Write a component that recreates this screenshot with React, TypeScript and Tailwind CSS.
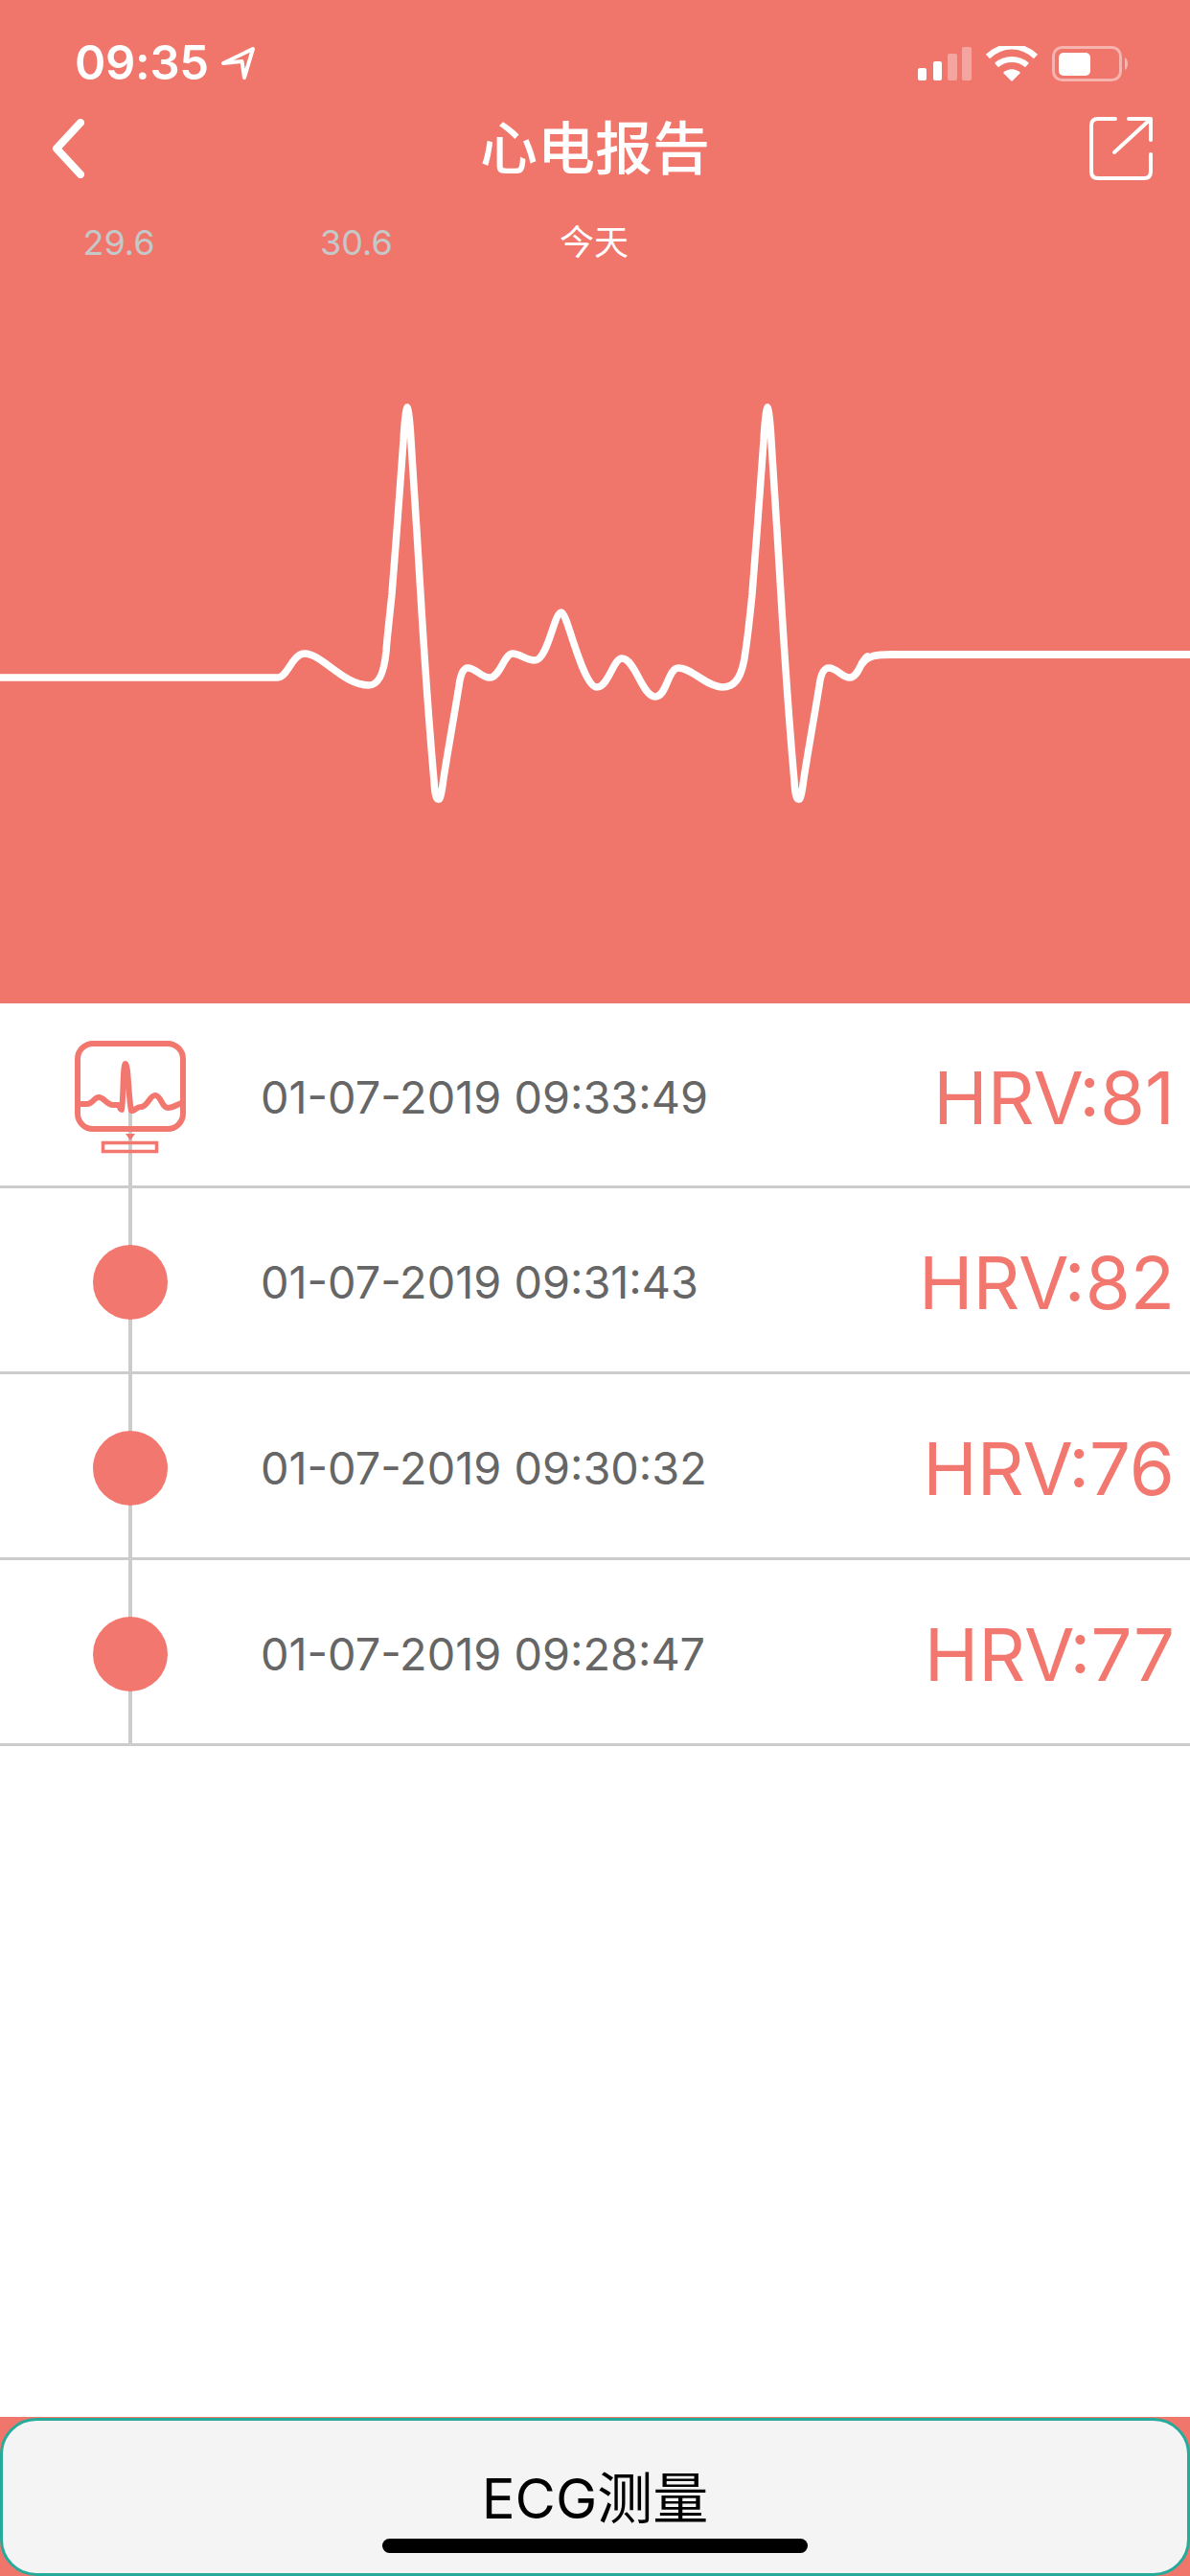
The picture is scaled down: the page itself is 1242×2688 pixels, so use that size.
import React from 'react';

const FONT = "font-['Inter','Noto_Sans_CJK_SC',sans-serif]";

const records = [
  { time: '01-07-2019 09:33:49', hrv: 'HRV:81' },
  { time: '01-07-2019 09:31:43', hrv: 'HRV:82' },
  { time: '01-07-2019 09:30:32', hrv: 'HRV:76' },
  { time: '01-07-2019 09:28:47', hrv: 'HRV:77' },
];

const StatusBar: React.FC = () => (
  <div className="flex h-[113px] items-start justify-between pl-[78px] pr-[62px] pt-[39px]">
    <div className="flex items-center gap-[13px]">
      <span className="text-[49px] leading-[54px] font-semibold tracking-[-0.3px] text-white">09:35</span>
      <svg width="36" height="34" viewBox="0 0 36 34">
        <path d="M2 17 L33 2 L24 32 L21.5 15 Z" fill="none" stroke="white" strokeWidth="4" strokeLinejoin="round" />
      </svg>
    </div>
    <svg width="222" height="38" viewBox="0 0 222 38" className="mt-[9px]">
      <rect x="0" y="23" width="9" height="13" rx="2" fill="white" />
      <rect x="16" y="16" width="9" height="20" rx="2" fill="white" />
      <rect x="31" y="8" width="10" height="28" rx="2" fill="white" opacity="0.35" />
      <rect x="46" y="1" width="10" height="35" rx="2" fill="white" opacity="0.35" />
      <path d="M73 11 C88 -3 108 -3 123 11" fill="none" stroke="white" strokeWidth="6" />
      <path d="M82 20 C91 12 105 12 114 20" fill="none" stroke="white" strokeWidth="6" />
      <path d="M89 28 C94 23 102 23 107 28 L98 37 Z" fill="white" />
      <rect x="141.5" y="1.5" width="70" height="34" rx="9" fill="none" stroke="white" strokeWidth="3" opacity="0.45" />
      <rect x="147" y="7" width="33" height="24" rx="5" fill="white" />
      <path d="M216 12 C220 14 220 23 216 25 Z" fill="white" opacity="0.45" />
    </svg>
  </div>
);

const NavBar: React.FC = () => (
  <div className="flex h-[84px] items-center">
    <div className="flex w-[120px] pl-[54px]">
      <svg width="34" height="62" viewBox="0 0 34 62">
        <path d="M30 4 L5 31 L30 58" fill="none" stroke="white" strokeWidth="8" strokeLinecap="round" strokeLinejoin="round" />
      </svg>
    </div>
    <span className="flex-1 text-center text-[60px] leading-[84px] font-medium text-white">心电报告</span>
    <div className="flex w-[120px] justify-end pr-[39px]">
      <svg width="66" height="66" viewBox="0 0 66 66">
        <path d="M27 2 H9 Q2 2 2 9 V57 Q2 64 9 64 H57 Q64 64 64 57 V39" fill="none" stroke="white" strokeWidth="4" strokeLinecap="round" />
        <path d="M41 2 H64 V24" fill="none" stroke="white" strokeWidth="4" strokeLinecap="round" strokeLinejoin="round" />
        <path d="M26 37 L63 3" fill="none" stroke="white" strokeWidth="4" strokeLinecap="round" />
      </svg>
    </div>
  </div>
);

const DateTabs: React.FC = () => (
  <div className="mt-[26px] flex h-[60px] items-center text-[36px] leading-[60px]">
    <span className="w-[248px] text-center text-[#c5c8c8]">29.6</span>
    <span className="w-[248px] text-center text-[#c5c8c8]">30.6</span>
    <span className="w-[248px] text-center text-white">今天</span>
  </div>
);

const EcgChart: React.FC = () => (
  <svg width="1242" height="660" viewBox="0 0 1242 660" className="block">
    <g transform="translate(0 -283)" fill="none" stroke="white" strokeLinejoin="round" strokeLinecap="round">
      <path
        strokeWidth="7.5"
        d="M-5 707 H290 C300 707 305 682 318 682 C336 682 358 715 385 715 C396 715 401 700 403 680 C404 665 407 640 409 620 C413 570 419 490 421 460 C422 440 424 425 425 425 C426 425 428 440 429 460 C431 490 436 570 439 620 C442 670 449 770 453 815 C454 833 456 834 458 834 C460 834 462 820 463 812 C468 780 476 735 479 716 C481 700 485 697 488 697 C497 697 502 707 511 707 C522 707 526 682 535 682 C543 682 549 689 558 689 C572 689 578 639 586 639 C592 639 608 717 623 717 C635 717 640 687 649 687 C663 687 670 727 684 727 C696 727 697 697 708 697 C722 697 738 717 754 717 C768 717 775 705 778 680 C781 660 783 640 785 620 C789 570 795 490 797 460 C798 440 800 425 801 425 C802 425 804 440 805 460 C807 490 812 570 815 620 C818 670 825 770 829 815 C830 833 832 834 834 834 C836 834 838 820 839 812 C844 780 852 735 855 716 C857 700 861 697 865 697 C874 697 878 707 887 707 C896 707 899 688 905 685"
      />
      <path strokeWidth="8" d="M900 692 C906 684 915 683 930 683 L1250 683" />
    </g>
  </svg>
);

const MonitorIcon: React.FC = () => (
  <svg width="116" height="120" viewBox="0 0 116 120" className="relative mt-[8px]" fill="none" stroke="#f2776f">
    <rect x="3" y="3" width="110" height="89" rx="16" strokeWidth="6" />
    <path
      strokeWidth="6"
      strokeLinejoin="round"
      d="M5 66 H13 C19 66 20 59 25 59 C31 59 33 67 40 67 H45 C47 67 47 72 49 72 C51 60 50 24 53 24 C56 24 56 60 59 73 C62 74 64 69 69 69 C76 69 78 57 84 57 C90 57 91 70 97 70 C103 70 106 67 111 65"
    />
    <path d="M53 97 H63 L58 104 Z" fill="#f2776f" stroke="none" />
    <rect x="29.5" y="106.5" width="56" height="9" strokeWidth="3.5" />
  </svg>
);

const RecordRow: React.FC<{ time: string; hrv: string; first: boolean }> = ({ time, hrv, first }) => (
  <div className={`flex items-center border-b-[3px] border-[#cccccc] ${first ? 'h-[193px]' : 'h-[194px]'}`}>
    <div className="flex w-[272px] shrink-0 justify-center">
      {first ? (
        <MonitorIcon />
      ) : (
        <div className="relative mt-[5px] h-[78px] w-[78px] rounded-full bg-[#f2776f]" />
      )}
    </div>
    <span className="mt-[5px] text-[46.8px] leading-[54px] text-[#666666]">{time}</span>
    <span className="ml-auto mt-[5px] pr-[16px] text-[76px] leading-[90px] text-[#f2776f]">{hrv}</span>
  </div>
);

export default function App() {
  return (
    <div className={`flex h-[2688px] w-[1242px] flex-col overflow-hidden bg-[#f0766c] ${FONT}`}>
      {/* Header */}
      <div className="flex h-[1047px] shrink-0 flex-col overflow-hidden">
        <StatusBar />
        <NavBar />
        <DateTabs />
        <EcgChart />
      </div>

      {/* Records */}
      <div className="relative h-[1475px] shrink-0 bg-white">
        <div className="absolute left-[134px] top-[113px] h-[660px] w-1 bg-[#cccccc]" />
        {records.map((r, i) => (
          <RecordRow key={r.time} time={r.time} hrv={r.hrv} first={i === 0} />
        ))}
      </div>

      {/* Bottom button */}
      <div className="relative flex-1 pt-[1px]">
        <div className="flex h-full items-start justify-center rounded-[38px] border-[3px] border-[#26ab9b] bg-[#f4f4f4] pt-[41px]">
          <span className="text-[58px] leading-[80px] text-black">ECG测量</span>
        </div>
        <div className="absolute bottom-[24px] left-[399px] h-[15px] w-[444px] rounded-full bg-black" />
      </div>
    </div>
  );
}
